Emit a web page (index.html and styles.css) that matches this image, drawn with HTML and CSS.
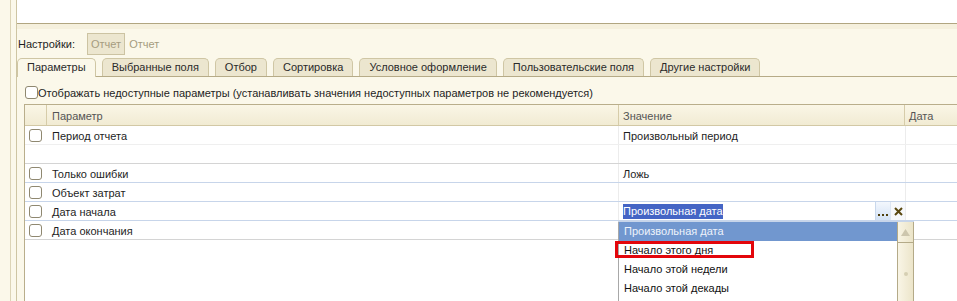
FILE: index.html
```html
<!DOCTYPE html>
<html lang="ru">
<head>
  <meta charset="UTF-8" />
  <title>Настройки отчета</title>
  <link rel="stylesheet" href="styles.css">
</head>
<body>
  <div class="window">
    <div class="main">
      <div class="preview"></div>

      <div class="settings">
        <span class="settings-label">Настройки:</span>
        <span class="variant">Отчет</span>
        <span class="variant-name">Отчет</span>
      </div>

      <div class="tabs">
        <div class="tab active">Параметры</div>
        <div class="tab">Выбранные поля</div>
        <div class="tab">Отбор</div>
        <div class="tab">Сортировка</div>
        <div class="tab">Условное оформление</div>
        <div class="tab">Пользовательские поля</div>
        <div class="tab">Другие настройки</div>
      </div>

      <div class="panel">
        <label class="show-unavailable">
          <span class="check"></span>
          Отображать недоступные параметры (устанавливать значения недоступных параметров не рекомендуется)
        </label>

        <div class="grid">
          <div class="row head">
            <div class="cell"></div>
            <div class="cell">Параметр</div>
            <div class="cell">Значение</div>
            <div class="cell">Дата</div>
          </div>
          <div class="row sep-light">
            <div class="cell"><span class="check"></span></div>
            <div class="cell">Период отчета</div>
            <div class="cell">Произвольный период</div>
            <div class="cell"></div>
          </div>
          <div class="row sep-gray">
            <div class="cell"></div>
            <div class="cell"></div>
            <div class="cell"></div>
            <div class="cell"></div>
          </div>
          <div class="row sep-blue">
            <div class="cell"><span class="check"></span></div>
            <div class="cell">Только ошибки</div>
            <div class="cell">Ложь</div>
            <div class="cell"></div>
          </div>
          <div class="row sep-blue">
            <div class="cell"><span class="check"></span></div>
            <div class="cell">Объект затрат</div>
            <div class="cell"></div>
            <div class="cell"></div>
          </div>
          <div class="row sep-blue">
            <div class="cell"><span class="check"></span></div>
            <div class="cell">Дата начала</div>
            <div class="cell editing">
              <span class="selected-text">Произвольная дата</span>
              <span class="field-btn choose">
                <svg width="11" height="3" viewBox="0 0 11 3"><path d="M0 0h2v2H0zM4 0h2v2H4zM8 0h2v2H8z" fill="#4f3f0c"/></svg>
              </span>
              <span class="field-btn clear">
                <svg width="9" height="9" viewBox="0 0 9 9"><path d="M1 1L8 8M8 1L1 8" stroke="#5a4810" stroke-width="2"/></svg>
              </span>
            </div>
            <div class="cell"></div>
          </div>
          <div class="row sep-gray">
            <div class="cell"><span class="check"></span></div>
            <div class="cell">Дата окончания</div>
            <div class="cell"></div>
            <div class="cell"></div>
          </div>
        </div>

        <!-- выпадающий список значения -->
        <div class="dropdown">
          <div class="list">
            <div class="item current">Произвольная дата</div>
            <div class="item">Начало этого дня</div>
            <div class="item">Начало этой недели</div>
            <div class="item">Начало этой декады</div>
          </div>
          <div class="scrollbar">
            <div class="scroll-up">
              <svg width="9" height="7" viewBox="0 0 9 7"><path d="M4.5 0L9 7H0Z" fill="#cdc6ad"/></svg>
            </div>
            <div class="scroll-track"><span class="thumb-dot"></span></div>
          </div>
        </div>
        <div class="mark"></div>
      </div>
    </div>
  </div>
</body>
</html>
```

FILE: styles.css
```css
body {
  margin: 0;
  height: 301px;
  overflow: hidden;
  background: #fbf8ea;
  font-family: "Liberation Sans", Arial, sans-serif;
  font-size: 11px;
  color: #1e1e1e;
}
.window {
  margin-left: 10px;
  padding-left: 5px;
  height: 100%;
  border-left: 1px solid #dcd4b6;
  box-sizing: border-box;
}
.main {
  height: 100%;
  border-left: 1px solid #cec5a3;
}
.preview {
  height: 23px;
  background: #fff;
  border-bottom: 1px solid #b1a681;
  box-shadow: 0 5px 0 #f5f0dd;
}

/* строка настроек */
.settings {
  display: flex;
  align-items: center;
  height: 22px;
  margin-top: 9px;
}
.settings-label {
  margin-left: 1px;
  width: 69px;
}
.variant {
  height: 22px;
  box-sizing: border-box;
  display: flex;
  align-items: center;
  padding: 0 3px;
  border: 1px solid #ccc3a2;
  background: #ece6cf;
  color: #a59c80;
}
.variant-name {
  margin-left: 4px;
  color: #a59c80;
}

/* вкладки */
.tabs {
  display: flex;
  align-items: flex-start;
  gap: 6px;
  height: 18px;
  margin-top: 3px;
  border-bottom: 1px solid #b6ab87;
}
.tab {
  height: 18px;
  box-sizing: border-box;
  padding: 0 9px;
  line-height: 17px;
  border: 1px solid #cfc6a4;
  border-bottom: none;
  border-radius: 5px 5px 0 0;
  background: #ece6cf;
  color: #2a2a2a;
  white-space: nowrap;
}
.tab.active {
  height: 19px;
  background: #fbf8ea;
}

.panel {
  position: relative;
  padding-top: 9px;
}
.show-unavailable {
  display: flex;
  align-items: center;
  height: 13px;
  margin-left: 8px;
  white-space: nowrap;
}
.check {
  display: inline-block;
  flex: none;
  width: 13px;
  height: 13px;
  box-sizing: border-box;
  border: 1px solid #8f8870;
  border-radius: 3px;
  background: #fff;
}

/* таблица параметров */
.grid {
  width: 1000px;
  height: 200px;
  margin: 5px 0 0 7px;
  border-left: 1px solid #b9ae8b;
  border-top: 1px solid #b9ae8b;
  background: #fff;
}
.row {
  display: grid;
  grid-template-columns: 22px 572px 286px 1fr;
  height: 19px;
  box-sizing: border-box;
  border-bottom: 1px solid #d6d6d6;
}
.row .cell {
  display: flex;
  align-items: center;
  white-space: nowrap;
  overflow: hidden;
  padding-top: 1px;
}
.row .cell:nth-child(1) .check {
  margin-left: 4px;
}
.row .cell:nth-child(2) {
  padding-left: 5px;
}
.row .cell:nth-child(3) {
  padding-left: 4px;
  border-left: 1px solid #ececec;
  margin-left: -1px;
}
.row .cell:nth-child(4) {
  padding-left: 4px;
  border-left: 1px solid #ececec;
}
.row.head {
  height: 21px;
  background: linear-gradient(#faf6e6, #f1ebd3);
  border-bottom-color: #d2c8a5;
  color: #555;
}
.row.head .cell {
  border-right: 1px solid #d6cca9;
}
.row.head .cell:nth-child(3),
.row.head .cell:nth-child(4) {
  border-left: none;
  margin-left: 0;
}
.sep-light { border-bottom-color: #efefef; }
.sep-gray  { border-bottom-color: #d4d4d4; }
.sep-blue  { border-bottom-color: #c7d5ea; }

.selected-text {
  background: #4465c5;
  color: #fff;
  line-height: 15px;
}
.row .cell.editing {
  padding-top: 0;
}
.field-btn {
  width: 15px;
  height: 18px;
  box-sizing: border-box;
  display: flex;
  align-items: center;
  justify-content: center;
  flex: none;
}
.field-btn.choose {
  margin-left: auto;
  align-items: flex-end;
  padding: 0 0 3px 1px;
  background: linear-gradient(#f3f7fd, #d3e2f5);
  border-left: 1px solid #c9d8ec;
}
.field-btn.clear {
  background: #f7f9fc;
  border-left: 1px solid #dde6f2;
}

/* выпадающий список */
.dropdown {
  position: absolute;
  left: 601px;
  top: 144px;
  width: 296px;
  height: 82px;
  display: flex;
  background: #fff;
  border-top: 1px solid #c7d5ea;
}
.list {
  width: 279px;
  border-left: 1px solid #a8a8a8;
  box-sizing: border-box;
}
.item {
  height: 19px;
  line-height: 19px;
  padding-left: 5px;
  color: #111;
}
.item.current {
  background: #7197cf;
  color: #eef3fb;
}
.scrollbar {
  width: 17px;
  display: flex;
  flex-direction: column;
  border-left: 1px solid #b4aa88;
  border-right: 1px solid #b4aa88;
  box-sizing: border-box;
}
.scroll-up {
  height: 20px;
  display: flex;
  align-items: center;
  justify-content: center;
  border-bottom: 1px solid #b4aa88;
  background: linear-gradient(to right, #f8f4e4, #ebe4c8);
}
.scroll-track {
  flex: 1;
  position: relative;
  background: linear-gradient(to right, #f9f5e6, #ece5ca);
}
.thumb-dot {
  position: absolute;
  left: 6px;
  top: 29px;
  width: 4px;
  height: 4px;
  border-radius: 50%;
  background: #d6cfb3;
}
.mark {
  position: absolute;
  left: 598px;
  top: 164px;
  width: 139px;
  height: 17px;
  box-sizing: border-box;
  border: 3px solid #e3060b;
}
```
